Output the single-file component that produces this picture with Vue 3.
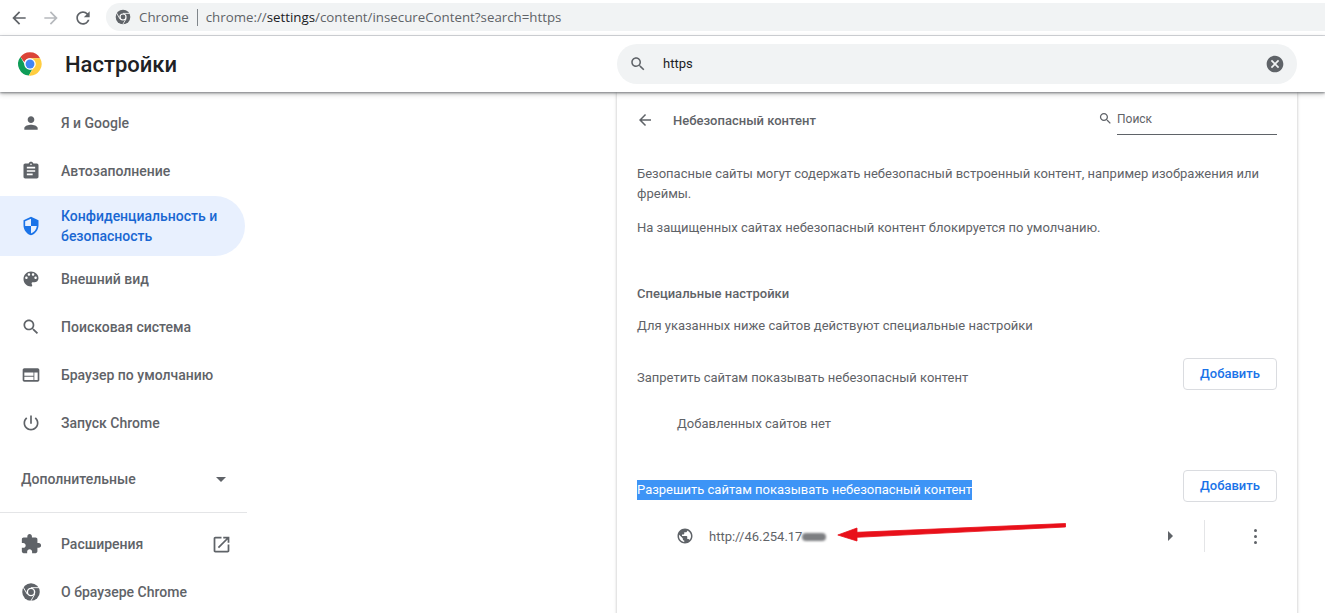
<script setup>
const P = {
  person: 'M12 12c2.21 0 4-1.79 4-4s-1.79-4-4-4-4 1.79-4 4 1.79 4 4 4zm0 2c-2.67 0-8 1.34-8 4v2h16v-2c0-2.66-5.33-4-8-4z',
  assignment: 'M19 3h-4.18C14.4 1.84 13.3 1 12 1c-1.3 0-2.4.84-2.82 2H5c-1.1 0-2 .9-2 2v14c0 1.1.9 2 2 2h14c1.1 0 2-.9 2-2V5c0-1.1-.9-2-2-2zm-7 0c.55 0 1 .45 1 1s-.45 1-1 1-1-.45-1-1 .45-1 1-1zm2 14H7v-2h7v2zm3-4H7v-2h10v2zm0-4H7V7h10v2z',
  security: 'M12 1L3 5v6c0 5.55 3.84 10.74 9 12 5.16-1.26 9-6.45 9-12V5l-9-4zm0 10.99h7c-.53 4.12-3.28 7.79-7 8.94V12H5V6.3l7-3.11v8.8z',
  palette: 'M12 3c-4.97 0-9 4.03-9 9s4.03 9 9 9c.83 0 1.5-.67 1.5-1.5 0-.39-.15-.74-.39-1.01-.23-.26-.38-.61-.38-.99 0-.83.67-1.5 1.5-1.5H16c2.76 0 5-2.24 5-5 0-4.42-4.03-8-9-8zm-5.5 9c-.83 0-1.5-.67-1.5-1.5S5.67 9 6.5 9 8 9.67 8 10.5 7.33 12 6.5 12zm3-4C8.67 8 8 7.33 8 6.5S8.67 5 9.5 5s1.5.67 1.5 1.5S10.33 8 9.5 8zm5 0c-.83 0-1.5-.67-1.5-1.5S13.67 5 14.5 5s1.5.67 1.5 1.5S15.33 8 14.5 8zm3 4c-.83 0-1.5-.67-1.5-1.5S16.67 9 17.5 9s1.5.67 1.5 1.5-.67 1.5-1.5 1.5z',
  search: 'M15.5 14h-.79l-.28-.27C15.41 12.59 16 11.11 16 9.5 16 5.91 13.09 3 9.5 3S3 5.91 3 9.5 5.91 16 9.5 16c1.61 0 3.09-.59 4.23-1.57l.27.28v.79l5 4.99L20.49 19l-4.99-5zm-6 0C7.01 14 5 11.99 5 9.5S7.01 5 9.5 5 14 7.01 14 9.5 11.99 14 9.5 14z',
  web: 'M20 4H4c-1.1 0-1.99.9-1.99 2L2 18c0 1.1.9 2 2 2h16c1.1 0 2-.9 2-2V6c0-1.1-.9-2-2-2zm-5 14H4v-4h11v4zm0-5H4V9h11v4zm5 5h-4V9h4v9z',
  power: 'M13 3h-2v10h2V3zm4.83 2.17l-1.42 1.42C17.99 7.86 19 9.81 19 12c0 3.87-3.13 7-7 7s-7-3.13-7-7c0-2.19 1.01-4.14 2.58-5.42L6.17 5.17C4.23 6.82 3 9.26 3 12c0 4.97 4.03 9 9 9s9-4.03 9-9c0-2.74-1.23-5.18-3.17-6.83z',
  extension: 'M20.5 11H19V7c0-1.1-.9-2-2-2h-4V3.5C13 2.12 11.88 1 10.5 1S8 2.12 8 3.5V5H4c-1.1 0-1.99.9-1.99 2v3.8H3.5c1.49 0 2.7 1.21 2.7 2.7s-1.21 2.7-2.7 2.7H2V20c0 1.1.9 2 2 2h3.8v-1.5c0-1.49 1.21-2.7 2.7-2.7 1.49 0 2.7 1.21 2.7 2.7V22H17c1.1 0 2-.9 2-2v-4h1.5c1.38 0 2.5-1.12 2.5-2.5S21.88 11 20.5 11z',
  open: 'M19 19H5V5h7V3H5c-1.11 0-2 .9-2 2v14c0 1.1.89 2 2 2h14c1.1 0 2-.9 2-2v-7h-2v7zM14 3v2h3.59l-9.83 9.83 1.41 1.41L19 6.41V10h2V3h-7z',
  globe: 'M12 2C6.48 2 2 6.48 2 12s4.48 10 10 10 10-4.48 10-10S17.52 2 12 2zm-1 17.93c-3.95-.49-7-3.85-7-7.93 0-.62.08-1.21.21-1.79L9 15v1c0 1.1.9 2 2 2v1.93zm6.9-2.54c-.26-.81-1-1.39-1.9-1.39h-1v-3c0-.55-.45-1-1-1H8v-2h2c.55 0 1-.45 1-1V7h2c1.1 0 2-.9 2-2v-.41c2.93 1.19 5 4.06 5 7.41 0 2.08-.8 3.97-2.1 5.39z',
  back: 'M20 11H7.83l5.59-5.59L12 4l-8 8 8 8 1.41-1.41L7.83 13H20v-2z',
  forward: 'M12 4l-1.41 1.41L16.17 11H4v2h12.17l-5.58 5.59L12 20l8-8z',
  reload: 'M17.65 6.35C16.2 4.9 14.21 4 12 4c-4.42 0-7.99 3.58-7.99 8s3.57 8 7.99 8c3.73 0 6.84-2.55 7.73-6h-2.08c-.82 2.33-3.04 4-5.65 4-3.31 0-6-2.69-6-6s2.69-6 6-6c1.66 0 3.14.69 4.22 1.78L13 11h7V4l-2.35 2.35z',
  clear: 'M12 2C6.47 2 2 6.47 2 12s4.47 10 10 10 10-4.47 10-10S17.53 2 12 2zm5 13.59L15.59 17 12 13.41 8.41 17 7 15.59 10.59 12 7 8.41 8.41 7 12 10.59 15.59 7 17 8.41 13.41 12 17 15.59z'
}
const mainItems = [
  { label: 'Я и Google', icon: P.person },
  { label: 'Автозаполнение', icon: P.assignment },
  { label: 'Конфиденциальность и безопасность', icon: P.security, active: true },
  { label: 'Внешний вид', icon: P.palette },
  { label: 'Поисковая система', icon: P.search },
  { label: 'Браузер по умолчанию', icon: P.web },
  { label: 'Запуск Chrome', icon: P.power }
]
</script>

<template>
  <div class="page">
    <div class="toolbar">
      <svg class="tb-icon" viewBox="0 0 24 24"><path :d="P.back" /></svg>
      <svg class="tb-icon faded" viewBox="0 0 24 24"><path :d="P.forward" /></svg>
      <svg class="tb-icon" viewBox="0 0 24 24"><path :d="P.reload" /></svg>
      <div class="omnibox">
        <svg class="omni-logo" viewBox="0 0 24 24">
          <circle cx="12" cy="12" r="11" fill="#5f6368" />
          <circle cx="12" cy="12" r="5.4" fill="#fff" />
          <circle cx="12" cy="12" r="3.6" fill="#5f6368" />
          <path d="M12 6.6H22M7.3 14.7L2.3 6M16.7 14.7L11.7 23" stroke="#fff" stroke-width="1.2" fill="none" />
        </svg>
        <span class="omni-chrome">Chrome</span>
        <span class="omni-sep"></span>
        <span class="omni-url">chrome://<b>settings</b>/content/insecureContent?search=https</span>
      </div>
    </div>

    <header class="header">
      <svg class="logo" viewBox="0 0 48 48">
        <path fill="#db4437" d="M24 4a20 20 0 0 1 17.3 10H24a10 10 0 0 0-9.6 7.2L7.6 12A20 20 0 0 1 24 4z" />
        <path fill="#0f9d58" d="M7.6 12l8.7 15A10 10 0 0 0 28 33.2l-6 10.7A20 20 0 0 1 7.6 12z" />
        <path fill="#ffcd40" d="M41.3 14A20 20 0 0 1 22 43.9L30.7 29A10 10 0 0 0 31 17z" />
        <path fill="#ffcd40" d="M41.3 14H24l7 4-8 12 8 4z" />
        <circle cx="24" cy="24" r="10" fill="#fff" />
        <circle cx="24" cy="24" r="7.6" fill="#4285f4" />
      </svg>
      <h1 class="title">Настройки</h1>
      <div class="search">
        <svg class="search-icon" viewBox="0 0 24 24"><path :d="P.search" /></svg>
        <span class="search-text">https</span>
        <svg class="clear-icon" viewBox="0 0 24 24"><path :d="P.clear" /></svg>
      </div>
    </header>

    <div class="body">
      <nav class="sidebar">
        <a v-for="item in mainItems" :key="item.label" class="nav-item" :class="{ active: item.active }">
          <svg class="nav-icon" viewBox="0 0 24 24"><path :d="item.icon" /></svg>
          <span class="nav-label">{{ item.label }}</span>
        </a>
        <div class="advanced">
          <span>Дополнительные</span>
          <span class="caret"></span>
        </div>
        <div class="nav-divider"></div>
        <a class="nav-item">
          <svg class="nav-icon ext" viewBox="0 0 24 24"><path :d="P.extension" /></svg>
          <span class="nav-label grow">Расширения</span>
          <svg class="nav-open" viewBox="0 0 24 24"><path :d="P.open" /></svg>
        </a>
        <a class="nav-item">
          <svg class="nav-icon" viewBox="0 0 24 24">
            <circle cx="12" cy="12" r="10.5" fill="#5f6368" />
            <circle cx="12" cy="12" r="5.2" fill="#fff" />
            <circle cx="12" cy="12" r="3.5" fill="#5f6368" />
            <path d="M12 6.8H21.5M7.5 14.6L2.7 6.4M16.5 14.6L11.8 22.8" stroke="#fff" stroke-width="1.1" fill="none" />
          </svg>
          <span class="nav-label">О браузере Chrome</span>
        </a>
      </nav>

      <main class="card">
        <div class="card-head">
          <svg class="card-back" viewBox="0 0 24 24"><path :d="P.back" /></svg>
          <h2 class="card-title">Небезопасный контент</h2>
          <div class="sub-search">
            <svg class="sub-icon" viewBox="0 0 24 24"><path :d="P.search" /></svg>
            <span class="sub-field">Поиск</span>
          </div>
        </div>

        <p class="text p1">Безопасные сайты могут содержать небезопасный встроенный контент, например изображения или фреймы.</p>
        <p class="text p2">На защищенных сайтах небезопасный контент блокируется по умолчанию.</p>
        <h3 class="text strong p3">Специальные настройки</h3>
        <p class="text p4">Для указанных ниже сайтов действуют специальные настройки</p>

        <div class="row r1">
          <span class="row-label">Запретить сайтам показывать небезопасный контент</span>
          <button class="add">Добавить</button>
        </div>
        <p class="text empty">Добавленных сайтов нет</p>

        <div class="row r2">
          <span class="row-label selected">Разрешить сайтам показывать небезопасный контент</span>
          <button class="add">Добавить</button>
        </div>

        <div class="site">
          <svg class="site-icon" viewBox="0 0 24 24"><path :d="P.globe" /></svg>
          <span class="site-url">http://46.254.17<i class="blur"></i></span>
          <span class="site-arrow"></span>
          <span class="site-sep"></span>
          <span class="site-more"><i></i><i></i><i></i></span>
        </div>

        <svg class="red-arrow" viewBox="0 0 230 24" width="230" height="24">
          <path d="M228.5 1.5 L20 10.3 L20 6 L0.8 13 L20 19 L20 15.3 L228.5 5 Z" fill="#e8101a" stroke="#e8101a" stroke-width=".8" stroke-linejoin="round" />
        </svg>
      </main>
    </div>
  </div>
</template>

<style>
html, body { margin: 0; background: #fff; }
</style>

<style scoped>
.page {
  width: 1325px;
  height: 613px;
  overflow: hidden;
  display: flex;
  flex-direction: column;
  font-family: Roboto, "Liberation Sans", sans-serif;
  font-size: 13px;
  color: #202124;
  background: #fff;
}
.toolbar {
  height: 35px;
  flex: none;
  display: flex;
  align-items: center;
  border-bottom: 1px solid #dadce0;
  padding-left: 9px;
}
.tb-icon { width: 20px; height: 20px; fill: #5f6368; margin-right: 12px; flex: none; }
.tb-icon.faded { fill: #b6b9bd; }
.omnibox {
  flex: 1;
  height: 28px;
  margin-left: 1px;
  margin-top: -1px;
  display: flex;
  align-items: center;
  background: #f1f3f4;
  border-radius: 14px 0 0 14px;
  padding-left: 9px;
  font-family: "Open Sans", "Noto Sans", sans-serif;
  font-size: 13.3px;
  color: #5f6368;
}
.omni-logo { width: 16px; height: 16px; flex: none; }
.omni-chrome { margin-left: 8px; }
.omni-sep { width: 1px; height: 17px; background: #80868b; margin: 0 8px; }
.omni-url b { font-weight: 400; color: #202124; }
.header {
  height: 56px;
  flex: none;
  display: flex;
  align-items: center;
  position: relative;
  z-index: 2;
  background: #fff;
  box-shadow: 0 1px 2px rgba(60, 64, 67, .55), 0 2px 5px rgba(60, 64, 67, .3);
}
.logo { width: 28px; height: 28px; margin-left: 16px; flex: none; }
.title {
  margin: 0 0 0 21px;
  width: 552px;
  font-size: 22px;
  font-weight: 500;
  color: #202124;
  flex: none;
}
.search {
  width: 680px;
  height: 40px;
  flex: none;
  display: flex;
  align-items: center;
  background: #f1f3f4;
  border-radius: 20px;
  box-sizing: border-box;
  padding: 0 12px;
}
.search-icon { width: 18px; height: 18px; fill: #5f6368; flex: none; }
.search-text { margin-left: 16px; flex: 1; font-size: 13px; padding-bottom: 1px; color: #202124; }
.clear-icon { width: 20px; height: 20px; fill: #5f6368; flex: none; }
.body { flex: 1; display: flex; min-height: 0; }
.sidebar { width: 247px; flex: none; padding-top: 7px; color: #5f6368; font-size: 14px; font-weight: 500; }
.nav-item {
  display: flex;
  align-items: center;
  height: 48px;
  padding-left: 21px;
  box-sizing: border-box;
  width: 245px;
}
.nav-item.active {
  height: 60px;
  margin: 1px 0 -1px;
  padding-bottom: 1px;
  background: #e8f0fe;
  border-radius: 0 30px 30px 0;
  color: #1967d2;
  line-height: 20px;
}
.nav-icon { width: 20px; height: 20px; fill: #5f6368; flex: none; margin-right: 20px; }
.nav-icon.ext { width: 22px; height: 22px; margin-left: -1px; margin-right: 19px; }
.active .nav-icon { fill: #1a73e8; }
.nav-label { width: 165px; }
.nav-label.grow { width: 150px; }
.nav-open { width: 21px; height: 21px; fill: #5f6368; flex: none; }
.advanced {
  display: flex;
  align-items: center;
  justify-content: space-between;
  height: 48px;
  margin-top: 8px;
  padding: 0 19px 0 21px;
  width: 245px;
  box-sizing: border-box;
}
.caret {
  width: 0;
  height: 0;
  border-left: 5px solid transparent;
  border-right: 5px solid transparent;
  border-top: 5px solid #5f6368;
}
.nav-divider { height: 1px; background: #e4e5e7; margin-top: 9px; margin-bottom: 7px; }
.card {
  width: 680px;
  margin-left: 370px;
  flex: none;
  position: relative;
  box-sizing: border-box;
  padding: 4px 20px 0;
  background: #fff;
  box-shadow: 0 0 3px rgba(60, 64, 67, .35);
  color: #5f6368;
  margin-bottom: -10px;
}
.card-head { height: 48px; display: flex; align-items: center; }
.card-back { width: 18px; height: 18px; fill: #5f6368; flex: none; margin: 0 19px 0 -1px; }
.card-title { margin: 0; flex: 1; font-size: 13px; font-weight: 500; color: #5f6368; }
.sub-search { display: flex; align-items: center; height: 48px; }
.sub-icon { width: 15px; height: 15px; fill: #5f6368; flex: none; margin: -3px 4px 0 0; }
.sub-field {
  width: 160px;
  height: 28px;
  line-height: 25px;
  font-size: 12px;
  color: #5f6368;
  border-bottom: 1px solid #5f6368;
  box-sizing: border-box;
  margin-top: 2px;
}
.text { margin: 0; line-height: 20px; font-size: 13px; font-weight: 400; color: #5f6368; }
.strong { font-weight: 500; }
.p1 { margin-top: 20px; }
.p2 { margin-top: 14px; }
.p3 { margin-top: 46px; }
.p4 { margin-top: 12px; }
.row { display: flex; justify-content: space-between; height: 32px; }
.r1 { margin-top: 22px; }
.r2 { margin-top: 36px; }
.row-label { align-self: flex-start; line-height: 20px; margin-top: 10px; color: #5f6368; }
.selected { background: #3d94f6; color: #fff; }
.add {
  width: 94px;
  height: 32px;
  flex: none;
  background: #fff;
  border: 1px solid #dadce0;
  border-radius: 4px;
  padding: 0 0 2px;
  font: 500 13px Roboto, "Liberation Sans", sans-serif;
  color: #1a73e8;
}
.empty { margin: 24px 0 0 40px; }
.site { display: flex; align-items: center; height: 32px; margin-top: 18px; padding-left: 40px; }
.site-icon { width: 18px; height: 18px; fill: #5f6368; flex: none; margin-left: -1px; }
.site-url { margin-left: 15px; width: 459px; display: flex; align-items: center; color: #5f6368; }
.blur {
  display: block;
  width: 24px;
  height: 8px;
  margin-top: 1px;
  border-radius: 4px;
  background: #7d7f82;
  filter: blur(1px);
}
.site-arrow {
  width: 0;
  height: 0;
  border-top: 5px solid transparent;
  border-bottom: 5px solid transparent;
  border-left: 5px solid #5f6368;
}
.site-sep { width: 1px; height: 32px; background: #e4e5e7; margin-left: 31px; }
.site-more { display: flex; flex-direction: column; gap: 3px; margin-left: 49px; }
.site-more i { display: block; width: 3px; height: 3px; border-radius: 50%; background: #5f6368; }
.red-arrow { position: absolute; left: 220px; top: 430px; }
</style>
